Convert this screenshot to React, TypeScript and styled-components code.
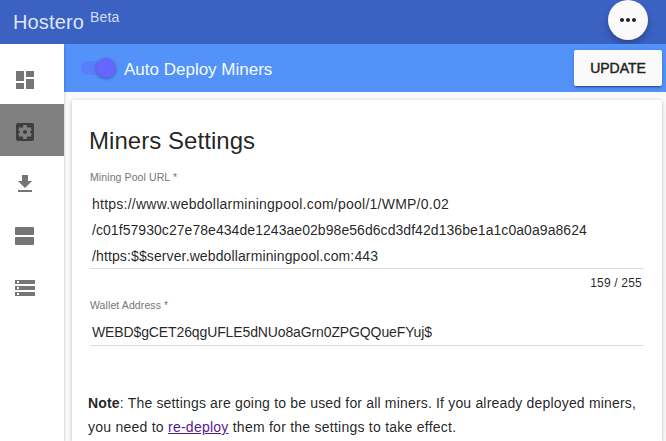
import React from "react";
import styled, { createGlobalStyle } from "styled-components";

const GlobalStyle = createGlobalStyle`
  * { box-sizing: border-box; }
  body {
    margin: 0;
    overflow: hidden;
    background: #fafafa;
    color: rgba(0, 0, 0, 0.87);
    font-family: "Liberation Sans", Arial, sans-serif;
    -webkit-font-smoothing: antialiased;
  }
`;

const Page = styled.div`
  display: flex;
  flex-direction: column;
  width: 666px;
  height: 441px;
  overflow: hidden;
`;

const Header = styled.header`
  display: flex;
  flex: none;
  align-items: flex-start;
  justify-content: space-between;
  height: 44px;
  padding: 0 18px 0 13px;
  background: #3b61c3;
`;

const Brand = styled.div`
  display: flex;
  gap: 6px;
  color: #dfe6f6;
`;

const BrandName = styled.span`
  padding-top: 10px;
  font-size: 20px;
  line-height: 24px;
  letter-spacing: 0.15px;
`;

const BrandTag = styled.span`
  padding-top: 9px;
  font-size: 14px;
  line-height: 16px;
  letter-spacing: 0.15px;
  color: #d3dcf3;
`;

const MoreButton = styled.button`
  display: grid;
  place-items: center;
  width: 40px;
  height: 40px;
  padding: 0;
  border: 0;
  border-radius: 50%;
  background: #fafafa;
  color: #212121;
  box-shadow: 0 3px 5px -1px rgba(0, 0, 0, 0.2), 0 5px 8px rgba(0, 0, 0, 0.14);
`;

const Body = styled.div`
  display: flex;
  flex: 1;
  min-height: 0;
`;

const Sidebar = styled.nav`
  z-index: 1;
  flex: none;
  width: 64px;
  padding-top: 8px;
  background: #fff;
  box-shadow: 0 1px 3px rgba(0, 0, 0, 0.25);
  clip-path: inset(0 -6px 0 0);
`;

const NavItem = styled.a<{ $active?: boolean }>`
  display: flex;
  align-items: center;
  height: 52px;
  padding: 4px 0 0 13px;
  background: ${(p) => (p.$active ? "#808080" : "transparent")};
  color: ${(p) => (p.$active ? "#3d3d3d" : "#757575")};
`;

const Main = styled.main`
  display: flex;
  flex: 1;
  flex-direction: column;
  min-width: 0;
`;

const Toolbar = styled.div`
  display: flex;
  flex: none;
  align-items: center;
  height: 48px;
  padding: 0 4px 0 17px;
  background: #5292f9;
`;

const Track = styled.span`
  display: flex;
  align-items: center;
  justify-content: flex-end;
  width: 34px;
  height: 14px;
  border-radius: 7px;
  background: #5a7efb;
`;

const Thumb = styled.span`
  flex: none;
  width: 20px;
  height: 20px;
  margin-right: -1px;
  border-radius: 50%;
  background: #6666ff;
  box-shadow: 0 1px 3px rgba(0, 0, 0, 0.35);
`;

const ToolbarTitle = styled.span`
  flex: 1;
  padding: 3px 0 0 9px;
  font-size: 17px;
  line-height: 20px;
  color: #f7faff;
`;

const UpdateButton = styled.button`
  width: 88px;
  height: 36px;
  padding: 0;
  border: 0;
  border-radius: 2px;
  background: #fafafa;
  color: #212121;
  font: 14px/36px "Liberation Sans", Arial, sans-serif;
  -webkit-text-stroke: 0.45px #212121;
  box-shadow: 0 3px 1px -2px rgba(0, 0, 0, 0.2), 0 2px 2px rgba(0, 0, 0, 0.14),
    0 1px 5px rgba(0, 0, 0, 0.12);
`;

const Card = styled.section`
  flex: 1;
  margin: 8px 4px 0 8px;
  padding: 25px 18px 0 16px;
  border-radius: 2px 2px 0 0;
  background: #fff;
  box-shadow: 0 1px 4px rgba(0, 0, 0, 0.26);
`;

const Heading = styled.h1`
  margin: 0 0 13px 1px;
  font-size: 24px;
  font-weight: 400;
  line-height: 32px;
  letter-spacing: 0.05px;
`;

const Field = styled.div`
  margin-left: 2px;
`;

const Label = styled.label`
  display: block;
  height: 21px;
  font-size: 10.5px;
  line-height: 15px;
  letter-spacing: 0.1px;
  color: #757575;
`;

const Value = styled.div<{ $height: number }>`
  height: ${(p) => p.$height}px;
  padding-left: 2px;
  border-bottom: 1px solid #dcdcdc;
  font-size: 14px;
  line-height: 26px;
`;

const ValueLine = styled.div<{ $tracking: number }>`
  letter-spacing: ${(p) => p.$tracking}px;
`;

const Counter = styled.div`
  height: 29px;
  padding: 7px 2px 0 0;
  font-size: 12px;
  line-height: 15px;
  letter-spacing: 0.2px;
  text-align: right;
`;

const Note = styled.p`
  margin: 45px 0 0;
  font-size: 14px;
  line-height: 24px;
  white-space: nowrap;
`;

const NoteLine = styled.span<{ $tracking: number }>`
  display: block;
  letter-spacing: ${(p) => p.$tracking}px;
`;

const Link = styled.a`
  color: #551a8b;
  text-decoration: underline;
`;

const ICONS = {
  dashboard: "M3 13h8V3H3v10zm0 8h8v-6H3v6zm10 0h8V11h-8v10zm0-18v6h8V3h-8z",
  settings:
    "M12 10c-1.1 0-2 .9-2 2s.9 2 2 2 2-.9 2-2-.9-2-2-2zm7-7H5c-1.11 0-2 .9-2 2v14c0 1.1.89 2 2 2h14c1.11 0 2-.9 2-2V5c0-1.1-.89-2-2-2zm-1.75 9c0 .23-.02.46-.05.68l1.48 1.16c.13.11.17.3.08.45l-1.4 2.42c-.09.15-.27.21-.43.15l-1.74-.7c-.36.28-.76.51-1.18.69l-.26 1.85c-.03.17-.18.3-.35.3h-2.8c-.17 0-.32-.13-.35-.29l-.26-1.85c-.43-.18-.82-.41-1.18-.69l-1.74.7c-.16.06-.34 0-.43-.15l-1.4-2.42c-.09-.15-.05-.34.08-.45l1.48-1.16c-.03-.23-.05-.46-.05-.69 0-.23.02-.46.05-.68l-1.48-1.16c-.13-.11-.17-.3-.08-.45l1.4-2.42c.09-.15.27-.21.43-.15l1.74.7c.36-.28.76-.51 1.18-.69l.26-1.85c.03-.17.18-.3.35-.3h2.8c.17 0 .32.13.35.29l.26 1.85c.43.18.82.41 1.18.69l1.74-.7c.16-.06.34 0 .43.15l1.4 2.42c.09.15.05.34-.08.45l-1.48 1.16c.03.23.05.46.05.69z",
  download: "M19 9h-4V3H9v6H5l7 7 7-7zM5 18v2h14v-2H5z",
  stream:
    "M3 3h17c.55 0 1 .45 1 1v6c0 .55-.45 1-1 1H3c-.55 0-1-.45-1-1V4c0-.55.45-1 1-1zM3 13h17c.55 0 1 .45 1 1v6c0 .55-.45 1-1 1H3c-.55 0-1-.45-1-1v-6c0-.55.45-1 1-1z",
  storage:
    "M2 20h20v-4H2v4zm2-3h2v2H4v-2zM2 4v4h20V4H2zm4 3H4V5h2v2zm-4 7h20v-4H2v4zm2-3h2v2H4v-2z",
  more: "M6 10c-1.1 0-2 .9-2 2s.9 2 2 2 2-.9 2-2-.9-2-2-2zm12 0c-1.1 0-2 .9-2 2s.9 2 2 2 2-.9 2-2-.9-2-2-2zm-6 0c-1.1 0-2 .9-2 2s.9 2 2 2 2-.9 2-2-.9-2-2-2z",
};

type IconName = keyof typeof ICONS;

const Icon = ({ name }: { name: IconName }) => (
  <svg width="24" height="24" viewBox="0 0 24 24" fill="currentColor" aria-hidden="true">
    <path d={ICONS[name]} />
  </svg>
);

const NAV: IconName[] = ["dashboard", "settings", "download", "stream", "storage"];

const POOL_URL = [
  { text: "https://www.webdollarminingpool.com/pool/1/WMP/0.02", tracking: 0.24 },
  { text: "/c01f57930c27e78e434de1243ae02b98e56d6cd3df42d136be1a1c0a0a9a8624", tracking: 0.055 },
  { text: "/https:$$server.webdollarminingpool.com:443", tracking: 0.12 },
];

export default function App() {
  return (
    <Page>
      <GlobalStyle />
      <Header>
        <Brand>
          <BrandName>Hostero</BrandName>
          <BrandTag>Beta</BrandTag>
        </Brand>
        <MoreButton aria-label="More">
          <Icon name="more" />
        </MoreButton>
      </Header>
      <Body>
        <Sidebar>
          {NAV.map((name) => (
            <NavItem key={name} $active={name === "settings"}>
              <Icon name={name} />
            </NavItem>
          ))}
        </Sidebar>
        <Main>
          <Toolbar>
            <Track role="switch" aria-checked="true">
              <Thumb />
            </Track>
            <ToolbarTitle>Auto Deploy Miners</ToolbarTitle>
            <UpdateButton>UPDATE</UpdateButton>
          </Toolbar>
          <Card>
            <Heading>Miners Settings</Heading>
            <Field>
              <Label>Mining Pool URL *</Label>
              <Value $height={78}>
                {POOL_URL.map(({ text, tracking }) => (
                  <ValueLine key={text} $tracking={tracking}>
                    {text}
                  </ValueLine>
                ))}
              </Value>
              <Counter>159 / 255</Counter>
            </Field>
            <Field>
              <Label>Wallet Address *</Label>
              <Value $height={27}>
                <ValueLine $tracking={-0.12}>WEBD$gCET26qgUFLE5dNUo8aGrn0ZPGQQueFYuj$</ValueLine>
              </Value>
            </Field>
            <Note>
              <NoteLine $tracking={0.175}>
                <b>Note</b>: The settings are going to be used for all miners. If you already deployed miners,
              </NoteLine>
              <NoteLine $tracking={0.245}>
                you need to <Link>re-deploy</Link> them for the settings to take effect.
              </NoteLine>
            </Note>
          </Card>
        </Main>
      </Body>
    </Page>
  );
}
